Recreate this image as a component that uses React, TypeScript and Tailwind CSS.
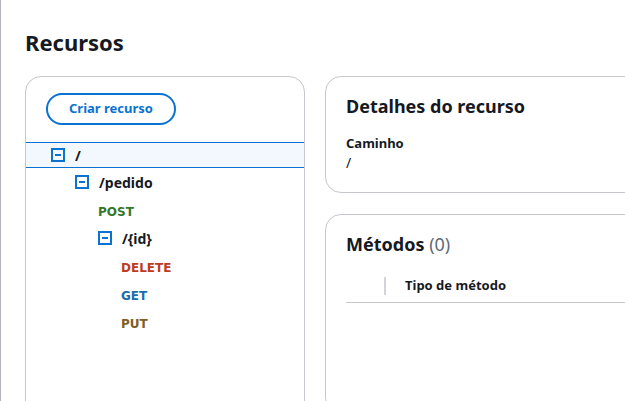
import React from "react";

type Node = {
  path: string;
  level: number;
  methods?: string[];
  children?: Node[];
  selected?: boolean;
};

const tree: Node = {
  path: "/",
  level: 0,
  selected: true,
  children: [
    {
      path: "/pedido",
      level: 1,
      methods: ["POST"],
      children: [{ path: "/{id}", level: 2, methods: ["DELETE", "GET", "PUT"] }],
    },
  ],
};

const methodColor: Record<string, string> = {
  POST: "text-[#34772a]",
  DELETE: "text-[#bd3b1f]",
  GET: "text-[#1b6cae]",
  PUT: "text-[#7d5f1f]",
};

const indent = ["pl-[25px]", "pl-[49px]", "pl-[72px]", "pl-[95px]"];

const CollapseIcon = () => (
  <svg width="14" height="14" viewBox="0 0 14 14" className="shrink-0">
    <rect x="1" y="1" width="12" height="12" fill="none" stroke="#0972d3" strokeWidth="2" />
    <line x1="4" y1="7" x2="10" y2="7" stroke="#0972d3" strokeWidth="2" />
  </svg>
);

const TreeNode = ({ node }: { node: Node }) => {
  return (
    <>
      <div
        className={
          node.selected
            ? `flex items-center gap-[10px] h-[26px] border-y border-[#0972d3] bg-[#f2f8fd] ${indent[node.level]}`
            : `flex items-center gap-[10px] h-[28px] ${indent[node.level]}`
        }
      >
        <CollapseIcon />
        <span className="text-[14px] font-bold text-[#16191f]">{node.path}</span>
      </div>
      {node.methods?.map((m) => (
        <div key={m} className={`flex items-center h-[28px] pt-[3px] ${indent[node.level + 1]}`}>
          <span
            className={`text-[12px] font-bold ${methodColor[m]}`}
            style={{ fontFamily: "'DejaVu Sans', sans-serif" }}
          >
            {m}
          </span>
        </div>
      ))}
      {node.children?.map((c) => (
        <TreeNode key={c.path} node={c} />
      ))}
    </>
  );
};

export default function App() {
  return (
    <div
      className="h-[401px] w-[625px] overflow-hidden bg-white border-l border-[#b4b4bb] pl-[24px] text-[#16191f]"
      style={{ fontFamily: "'Noto Sans', sans-serif" }}
    >
      <h1 className="pt-[27px] text-[22px] leading-[31px] font-bold">Recursos</h1>
      <div className="mt-[18px] flex gap-[20px] w-[800px]">
        <div className="w-[280px] h-[400px] shrink-0 rounded-[16px] border border-[#c6c6cd] overflow-hidden">
          <div className="pt-[16px] pl-[20px]">
            <button className="h-[32px] w-[130px] rounded-full border-2 border-[#0972d3] text-[13px] font-bold text-[#0972d3]">
              Criar recurso
            </button>
          </div>
          <div className="mt-[17px]">
            <TreeNode node={tree} />
          </div>
        </div>
        <div className="flex flex-col gap-[21px] w-[420px]">
          <div className="h-[117px] rounded-[16px] border border-[#c6c6cd] px-[20px] pt-[16px]">
            <h2 className="text-[18px] leading-[26px] font-bold">Detalhes do recurso</h2>
            <div className="mt-[14px] text-[13px] leading-[20px] font-bold">Caminho</div>
            <div className="text-[14px] leading-[20px]">/</div>
          </div>
          <div className="h-[200px] rounded-[16px] border border-[#c6c6cd] pl-[20px] pt-[16px]">
            <h2 className="text-[18px] leading-[26px] font-bold">
              Métodos <span className="font-normal text-[#5f6b7a]">(0)</span>
            </h2>
            <div className="mt-[12px] flex items-center h-[34px] border-b border-[#c6c6cd]">
              <div className="ml-[38px] h-[18px] w-[2px] bg-[#d1d5db]" />
              <span className="ml-[19px] text-[13px] font-bold">Tipo de método</span>
            </div>
          </div>
        </div>
      </div>
    </div>
  );
}
